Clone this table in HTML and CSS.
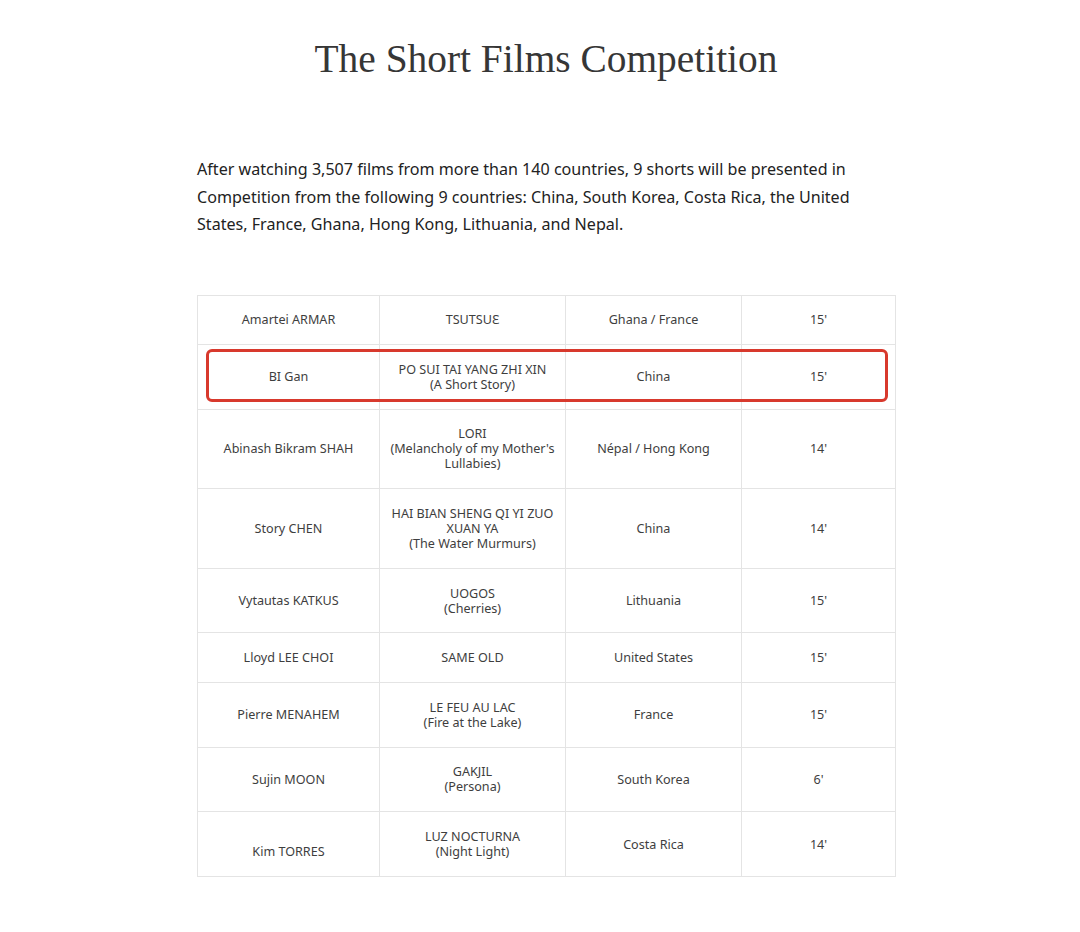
FILE: index.html
```html
<!DOCTYPE html>
<html lang="en">
<head>
<meta charset="utf-8">
<title>The Short Films Competition</title>
<link rel="stylesheet" href="styles.css">
</head>
<body>
<main class="page">
  <h1 class="title">The Short Films Competition</h1>
  <p class="intro">After watching 3,507 films from more than 140 countries, 9 shorts will be presented in Competition from the following 9 countries: China, South Korea, Costa Rica, the United States, France, Ghana, Hong Kong, Lithuania, and Nepal.</p>
  <div class="table-wrap">
    <table class="films">
      <colgroup>
        <col class="c1"><col class="c2"><col class="c3"><col class="c4">
      </colgroup>
      <tbody>
        <tr><td>Amartei ARMAR</td><td>TSUTSUƐ</td><td>Ghana / France</td><td>15'</td></tr>
        <tr><td>BI Gan</td><td>PO SUI TAI YANG ZHI XIN<br>(A Short Story)</td><td>China</td><td>15'</td></tr>
        <tr><td>Abinash Bikram SHAH</td><td>LORI<br>(Melancholy of my Mother's Lullabies)</td><td>Népal / Hong Kong</td><td>14'</td></tr>
        <tr><td>Story CHEN</td><td>HAI BIAN SHENG QI YI ZUO XUAN YA<br>(The Water Murmurs)</td><td>China</td><td>14'</td></tr>
        <tr><td>Vytautas KATKUS</td><td>UOGOS<br>(Cherries)</td><td>Lithuania</td><td>15'</td></tr>
        <tr><td>Lloyd LEE CHOI</td><td>SAME OLD</td><td>United States</td><td>15'</td></tr>
        <tr><td>Pierre MENAHEM</td><td>LE FEU AU LAC<br>(Fire at the Lake)</td><td>France</td><td>15'</td></tr>
        <tr><td>Sujin MOON</td><td>GAKJIL<br>(Persona)</td><td>South Korea</td><td>6'</td></tr>
        <tr><td><br>Kim TORRES</td><td>LUZ NOCTURNA<br>(Night Light)</td><td>Costa Rica</td><td>14'</td></tr>
      </tbody>
    </table>
    <div class="highlight"></div>
  </div>
</main>
</body>
</html>
```
FILE: styles.css
```css
html, body {
  margin: 0;
  padding: 0;
  background: #ffffff;
}

.page {
  width: 698px;
  margin-left: 197px;
  padding-top: 35px;
  padding-bottom: 40px;
}

.title {
  margin: 0;
  font-family: "Liberation Serif", "DejaVu Serif", serif;
  font-weight: 400;
  font-size: 39.4px;
  line-height: 48px;
  color: #363636;
  text-align: center;
}

.intro {
  margin: 73px 0 56px 0;
  font-family: "Noto Sans", "Open Sans", sans-serif;
  font-size: 16.1px;
  line-height: 27.5px;
  color: #222222;
  font-weight: 400;
}

.table-wrap {
  position: relative;
}

.films {
  width: 698px;
  table-layout: fixed;
  border-collapse: collapse;
  font-family: "Noto Sans", "Open Sans", sans-serif;
  font-size: 12.6px;
  line-height: 15px;
  color: #3e3e3e;
  font-weight: 400;
}

.c1 { width: 182px; }
.c2 { width: 186px; }
.c3 { width: 176px; }
.c4 { width: 154px; }

.films td {
  border: 1px solid #e4e4e4;
  padding: 16.8px 10px;
  text-align: center;
  vertical-align: middle;
}

.highlight {
  position: absolute;
  left: 9px;
  top: 54px;
  width: 676px;
  height: 47px;
  border: 3px solid #d8392d;
  border-radius: 6px;
}
```
